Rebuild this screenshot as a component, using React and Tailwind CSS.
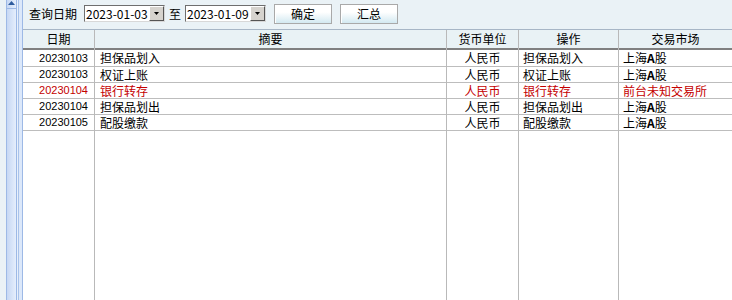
import React from 'react';

const MarketA = () => (
  <span>
    上海<span className="font-bold">A</span>股
  </span>
);

const rows = [
  { date: '20230103', summary: '担保品划入', currency: '人民币', op: '担保品划入', market: <MarketA /> },
  { date: '20230103', summary: '权证上账', currency: '人民币', op: '权证上账', market: <MarketA /> },
  { date: '20230104', summary: '银行转存', currency: '人民币', op: '银行转存', market: '前台未知交易所', red: true },
  { date: '20230104', summary: '担保品划出', currency: '人民币', op: '担保品划出', market: <MarketA /> },
  { date: '20230105', summary: '配股缴款', currency: '人民币', op: '配股缴款', market: <MarketA /> },
];

const columns = [
  { title: '日期', key: 'date', width: 'w-[72px]', align: 'justify-end pr-[6px] text-[11px] font-["Liberation_Sans"]' },
  { title: '摘要', key: 'summary', width: 'w-[352px]', align: 'justify-start pl-[5px] text-[12px]' },
  { title: '货币单位', key: 'currency', width: 'w-[72px]', align: 'justify-center text-[12px]' },
  { title: '操作', key: 'op', width: 'w-[100px]', align: 'justify-start pl-[4px] text-[12px]' },
  { title: '交易市场', key: 'market', width: 'flex-1', align: 'justify-start pl-[4px] text-[12px]', last: true },
];

const DateCombo = ({ value }) => (
  <div className="flex h-[17px] w-[81px] items-stretch border border-t-[#6e6e6e] border-l-[#6e6e6e] border-r-[#d8d8d8] border-b-[#d8d8d8] bg-white">
    <div className="flex flex-1 items-center pl-[1px] text-[12px] leading-none text-black">{value}</div>
    <div className="flex w-[15px] items-center justify-center border border-t-white border-l-white border-r-[#555] border-b-[#555] bg-[#d6d3ce]">
      <svg width="7" height="4" viewBox="0 0 7 4">
        <path d="M1 0h5l-2.5 3z" fill="#000" />
      </svg>
    </div>
  </div>
);

const ToolButton = ({ label }) => (
  <button className="flex h-[20px] w-[58px] items-center justify-center border border-[#a9a9a9] bg-gradient-to-b from-white from-40% to-[#d3e9f1] text-[12px] leading-none text-black shadow-[inset_1px_1px_0_#ffffff]">
    {label}
  </button>
);

const App = () => {
  return (
    <div
      className="flex h-[300px] w-[732px] overflow-hidden bg-white"
      style={{ fontFamily: '"Noto Sans CJK SC", "Noto Sans", sans-serif' }}
    >
      {/* left scroll strip */}
      <div className="flex h-full w-[23px] shrink-0">
        <div className="w-[6px] bg-[#eaf2f6]" />
        <div className="w-[1px] bg-[#9db9e6]" />
        <div className="relative w-[9px] bg-gradient-to-r from-[#c6d8f4] to-[#e5eefc]">
          <svg className="absolute left-[1px] top-[1px]" width="7" height="4" viewBox="0 0 7 4">
            <path d="M3.5 0L7 4H0z" fill="#2e5c9e" />
          </svg>
          <div className="absolute left-0 right-0 top-[8px] h-[1px] bg-[#9db9e6]" />
        </div>
        <div className="w-[1px] bg-[#9db9e6]" />
        <div className="w-[1px] bg-[#e8f0fb]" />
        <div className="w-[1px] bg-[#a9c3ea]" />
        <div className="w-[3px] bg-[#dce8fa]" />
        <div className="w-[1px] bg-[#9db9e6]" />
      </div>

      <div className="flex min-w-0 flex-1 flex-col">
        {/* toolbar */}
        <div className="flex h-[30px] shrink-0 items-center border-b border-[#a7b6c6] bg-[#eaf2f6] pb-[2px] text-[12px] text-black">
          <span className="ml-[6px] mr-[7px] leading-none">查询日期</span>
          <DateCombo value="2023-01-03" />
          <span className="mx-[4px] leading-none">至</span>
          <DateCombo value="2023-01-09" />
          <div className="ml-[8px] flex gap-[8px]">
            <ToolButton label="确定" />
            <ToolButton label="汇总" />
          </div>
        </div>

        {/* grid */}
        <div className="flex min-h-0 flex-1">
          {columns.map((col) => (
            <div
              key={col.key}
              className={`flex h-full flex-col ${col.width} ${col.last ? '' : 'shrink-0 border-r border-[#b9b9b9]'}`}
            >
              <div className="flex h-[20px] shrink-0 items-center justify-center border-b-2 border-[#808080] bg-[#e9f2f5] text-[12px] leading-none text-black">
                {col.title}
              </div>
              {rows.map((row, i) => (
                <div
                  key={i}
                  className={`flex ${i === 0 ? 'h-[17px]' : 'h-[16px]'} shrink-0 items-center border-b border-[#bdbdbd] leading-none ${col.align} ${row.red ? 'text-[#c40000]' : 'text-black'}`}
                >
                  {row[col.key]}
                </div>
              ))}
            </div>
          ))}
        </div>
      </div>
    </div>
  );
};

export default App;
